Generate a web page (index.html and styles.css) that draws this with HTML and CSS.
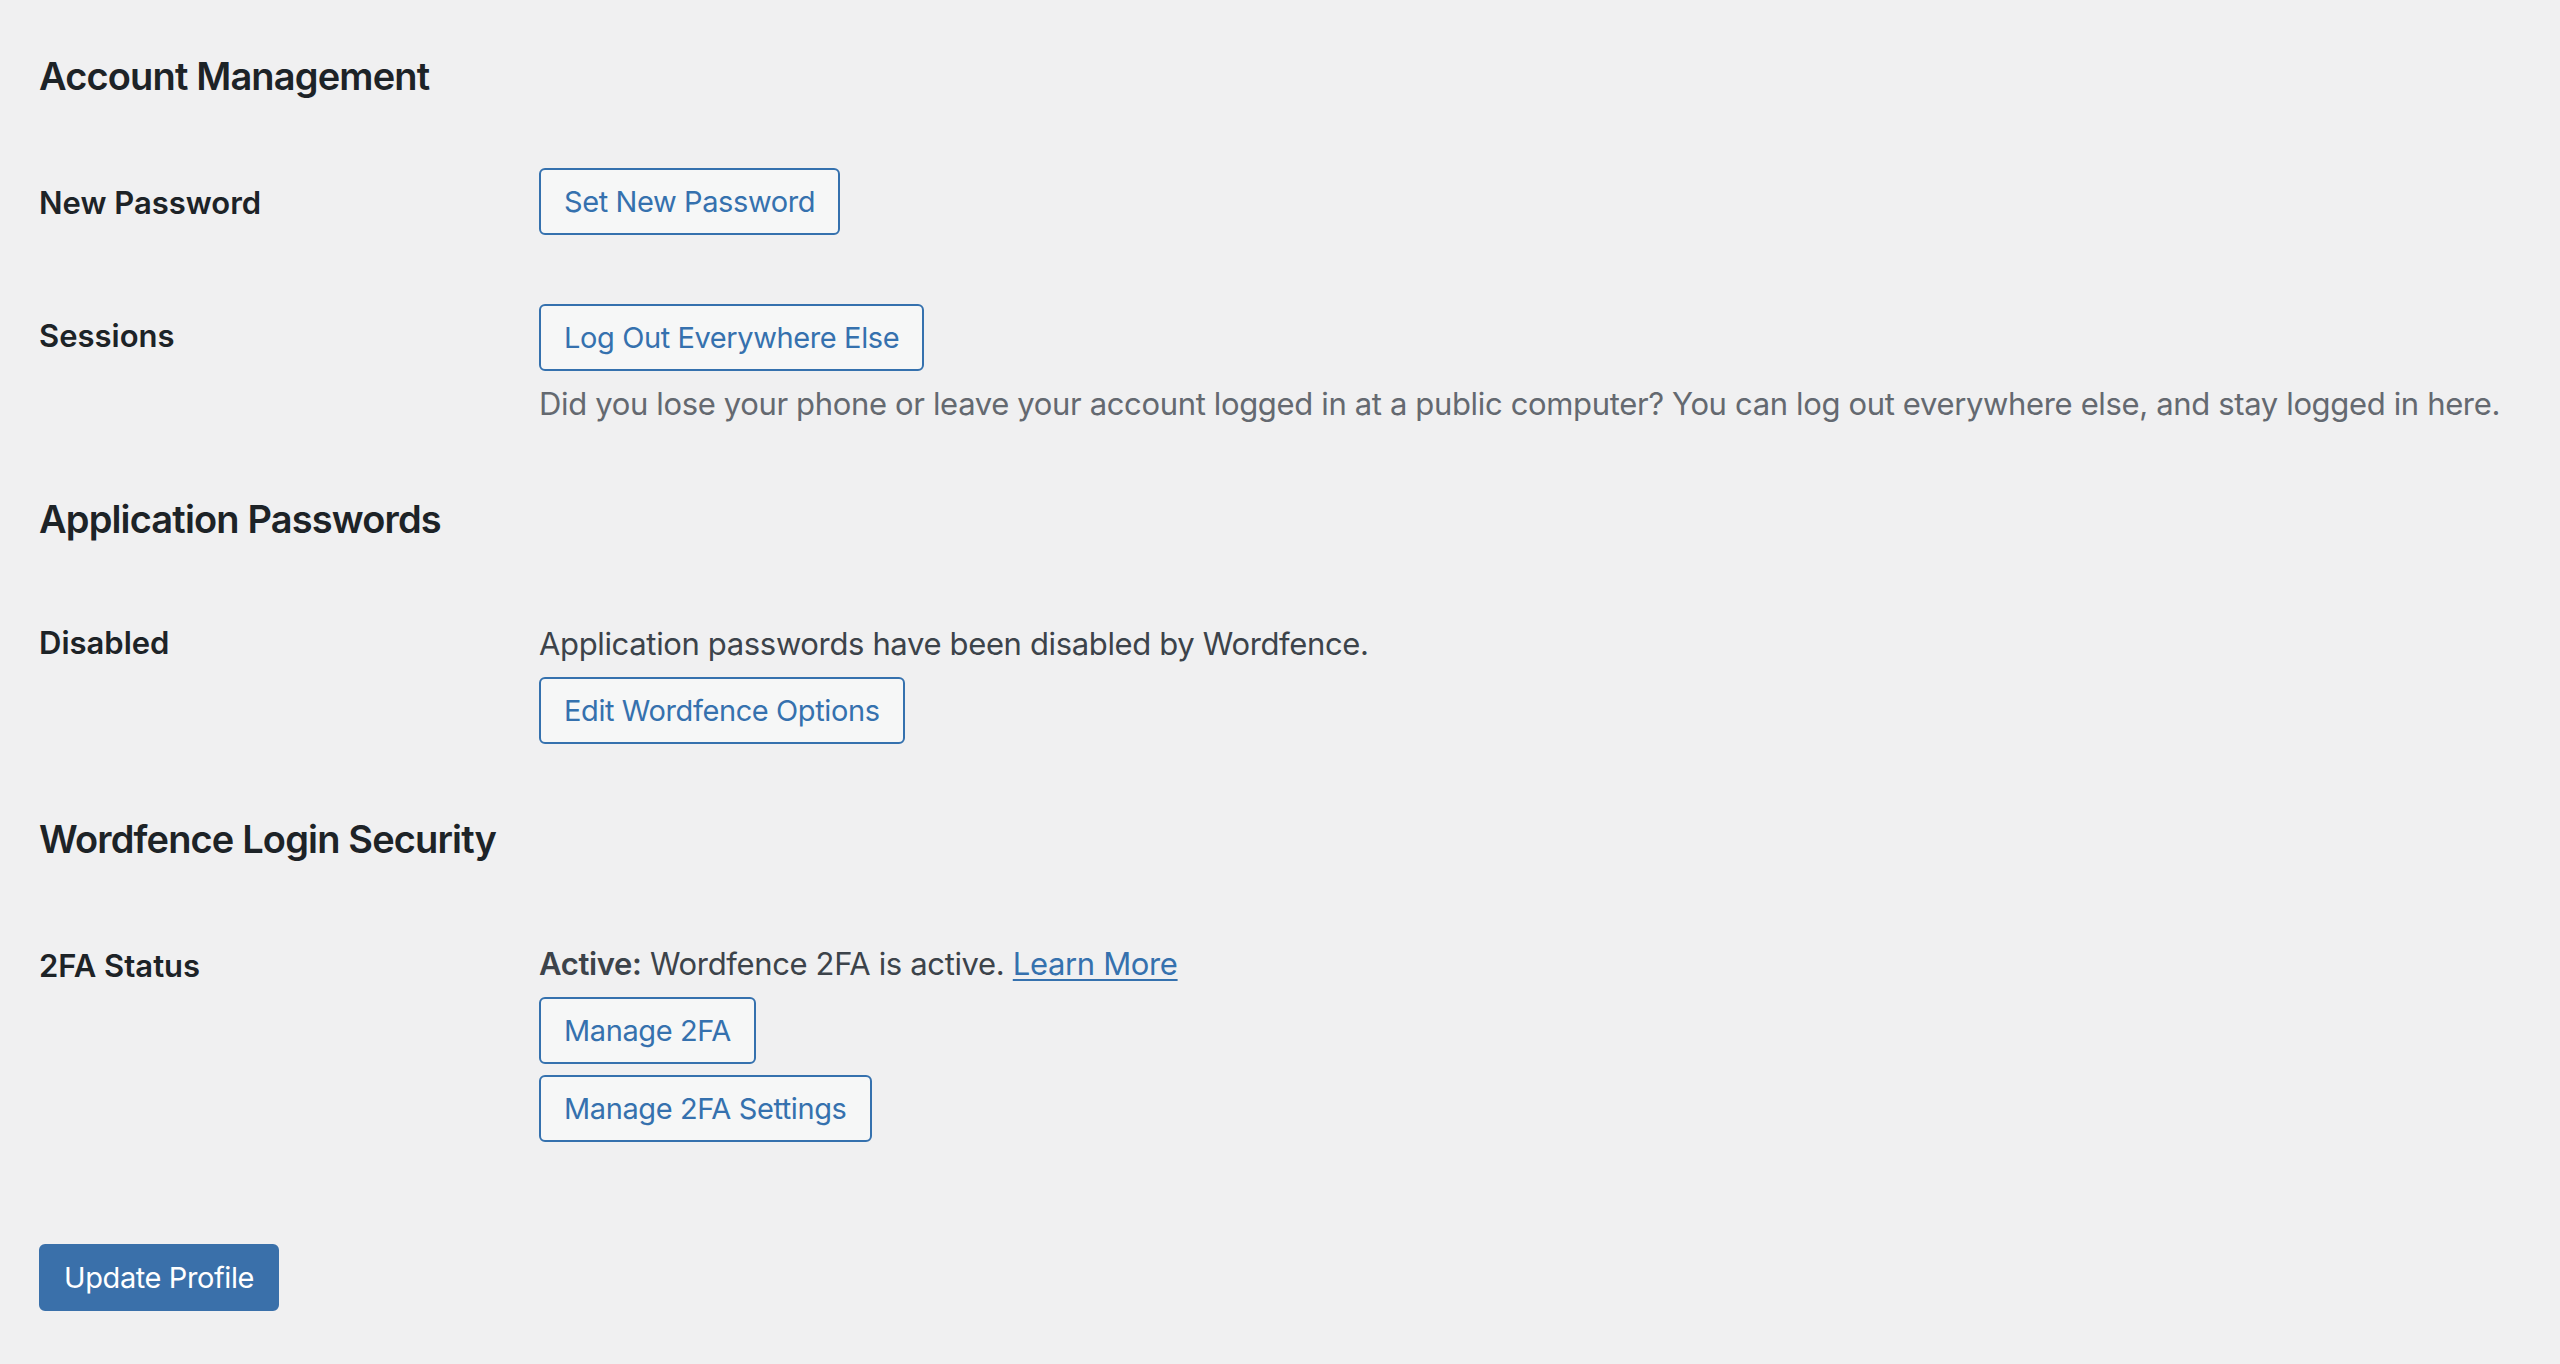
FILE: index.html
```html
<!DOCTYPE html>
<html lang="en">
<head>
<meta charset="utf-8">
<title>Profile</title>
<link rel="stylesheet" href="styles.css">
</head>
<body>
<main class="page">
  <h2 class="section-title first">Account Management</h2>
  <div class="form-table">
    <div class="row row-wide">
      <div class="th">New Password</div>
      <div class="td"><button class="btn" type="button">Set New Password</button></div>
    </div>
    <div class="row">
      <div class="th">Sessions</div>
      <div class="td">
        <button class="btn" type="button">Log Out Everywhere Else</button>
        <p class="description">Did you lose your phone or leave your account logged in at a public computer? You can log out everywhere else, and stay logged in here.</p>
      </div>
    </div>
  </div>

  <h2 class="section-title">Application Passwords</h2>
  <div class="form-table">
    <div class="row">
      <div class="th">Disabled</div>
      <div class="td">
        <p class="text">Application passwords have been disabled by Wordfence.</p>
        <button class="btn" type="button">Edit Wordfence Options</button>
      </div>
    </div>
  </div>

  <h2 class="section-title">Wordfence Login Security</h2>
  <div class="form-table">
    <div class="row row-wide">
      <div class="th">2FA Status</div>
      <div class="td">
        <p class="text"><strong>Active:</strong> Wordfence 2FA is active. <a href="#" class="link">Learn More</a></p>
        <div class="btn-stack">
          <button class="btn" type="button">Manage 2FA</button>
          <button class="btn" type="button">Manage 2FA Settings</button>
        </div>
      </div>
    </div>
  </div>

  <div class="submit">
    <button class="btn btn-primary" type="button">Update Profile</button>
  </div>
</main>
</body>
</html>
```
FILE: styles.css
```css
* { box-sizing: border-box; }

html, body {
  margin: 0;
  padding: 0;
  background: #f0f0f1;
}

body {
  font-family: Inter, "Noto Sans", "Liberation Sans", sans-serif;
  color: #3c434a;
  font-size: 31px;
  line-height: 1.3;
}

.page {
  padding: 0 0 60px 39px;
}

.section-title {
  margin: 30px 0 0;
  font-size: 38px;
  line-height: 50px;
  font-weight: 600;
  letter-spacing: -0.85px;
  color: #1d2327;
}

.section-title.first {
  margin-top: 51px;
}

.form-table {
  margin-top: 38px;
}

.row {
  display: grid;
  grid-template-columns: 500px 1fr;
  align-items: start;
}

.th {
  padding: 41px 0 0;
  font-size: 31px;
  line-height: 40px;
  font-weight: 600;
  color: #1d2327;
}

.row-wide .th {
  padding-top: 44px;
}

.td {
  padding: 29px 0 40px;
  display: flex;
  flex-direction: column;
  align-items: flex-start;
}

.text {
  margin: 13px 0 13px;
  font-size: 31px;
  line-height: 40px;
  letter-spacing: -0.35px;
  color: #3c434a;
}

.text strong {
  font-weight: 600;
}

.description {
  margin: 13px 0 0;
  font-size: 31px;
  line-height: 40px;
  letter-spacing: -0.35px;
  color: #646970;
}

.link {
  color: #3571ae;
  text-decoration: underline;
  text-underline-offset: 4px;
  text-decoration-thickness: 2px;
}

.btn-stack {
  display: flex;
  flex-direction: column;
  align-items: flex-start;
  gap: 11px;
}

.btn {
  display: inline-block;
  height: 67px;
  margin: 0;
  padding: 0 23px;
  border: 2px solid #3571ae;
  border-radius: 6px;
  background: #f6f7f7;
  color: #3571ae;
  font-family: inherit;
  font-size: 29px;
  line-height: 63px;
  font-weight: 400;
  letter-spacing: -0.4px;
  white-space: nowrap;
  cursor: pointer;
}

.btn-primary {
  background: #3a70aa;
  border-color: #3a70aa;
  color: #ffffff;
}

.submit {
  margin-top: 62px;
}
```
